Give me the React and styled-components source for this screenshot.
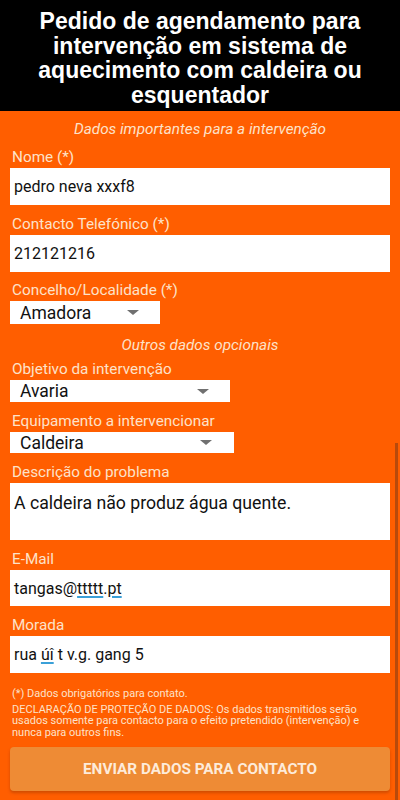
import React from 'react';
import styled, { createGlobalStyle } from 'styled-components';

const GlobalStyle = createGlobalStyle`
  html, body {
    margin: 0;
    padding: 0;
    background: #ff5e00;
  }
  * {
    box-sizing: border-box;
  }
`;

const Page = styled.div`
  width: 400px;
  height: 800px;
  position: relative;
  overflow: hidden;
  background: #ff5e00;
  font-family: Roboto, 'Liberation Sans', sans-serif;
`;

const Header = styled.div`
  background: #000;
  color: #fff;
  height: 111px;
  padding: 9px 16px 0;
  text-align: center;
  font-family: 'Liberation Sans', Arial, sans-serif;
  font-weight: 700;
  font-size: 23px;
  line-height: 24.5px;
`;

const Form = styled.div`
  padding: 9px 10px 0;
  display: flex;
  flex-direction: column;
`;

const Section = styled.div`
  text-align: center;
  font-style: italic;
  font-size: 15.3px;
  line-height: 18px;
  color: #fde2c9;
  margin-top: ${p => p.$mt || 0}px;
  margin-bottom: ${p => p.$mb || 7}px;
`;

const Label = styled.div`
  font-size: 15.3px;
  line-height: 16px;
  color: #fde2c9;
  padding-left: 2px;
  margin-bottom: 3px;
`;

const Field = styled.div`
  margin-bottom: ${p => p.$mb || 11}px;
`;

const Input = styled.div`
  background: #fff;
  height: ${p => p.$h || 37}px;
  padding: ${p => (p.$top ? '10px 4px 0' : '0 4px')};
  display: flex;
  align-items: ${p => (p.$top ? 'flex-start' : 'center')};
  font-size: ${p => p.$fs || 16}px;
  line-height: 21px;
  color: #111;
`;

const Spell = styled.span`
  text-decoration: underline;
  text-decoration-color: #3aa0d8;
  text-decoration-thickness: 2px;
  text-underline-offset: 2px;
`;

const Select = styled.div`
  width: ${p => p.$w}px;
  height: ${p => p.$h || 22}px;
  background: #fff;
  display: flex;
  align-items: center;
  justify-content: space-between;
  padding: 0 ${p => p.$pr || 21}px 0 10px;
  font-size: 17.5px;
  color: #111;
`;

const Arrow = styled.span`
  width: 0;
  height: 0;
  border-left: 6px solid transparent;
  border-right: 6px solid transparent;
  border-top: 5px solid #707070;
`;

const Note = styled.div`
  font-size: 11px;
  line-height: 11.5px;
  color: #fde2c9;
  padding-left: 2px;
  margin-top: ${p => p.$mt || 0}px;
`;

const Button = styled.div`
  margin-top: 9px;
  height: 44px;
  border-radius: 4px;
  background: #ee8b35;
  box-shadow: 0 2px 3px rgba(120, 40, 0, 0.35);
  display: flex;
  align-items: center;
  justify-content: center;
  color: #fdebdb;
  font-weight: 700;
  font-size: 15.3px;
`;

const Scrollbar = styled.div`
  position: absolute;
  right: 2px;
  top: 443px;
  width: 3px;
  height: 357px;
  background: #b84a0c;
`;

export default function App() {
  return (
    <Page>
      <GlobalStyle />
      <Header>
        Pedido de agendamento para intervenção em sistema de aquecimento com caldeira ou
        esquentador
      </Header>
      <Form>
        <Section $mb={11}>Dados importantes para a intervenção</Section>
        <Field>
          <Label>Nome (*)</Label>
          <Input>pedro neva xxxf8</Input>
        </Field>
        <Field $mb={10}>
          <Label>Contacto Telefónico (*)</Label>
          <Input>212121216</Input>
        </Field>
        <Field $mb={12}>
          <Label>Concelho/Localidade (*)</Label>
          <Select $w={150} $h={23}>
            Amadora
            <Arrow />
          </Select>
        </Field>
        <Section>Outros dados opcionais</Section>
        <Field>
          <Label>Objetivo da intervenção</Label>
          <Select $w={220}>
            Avaria
            <Arrow />
          </Select>
        </Field>
        <Field>
          <Label>Equipamento a intervencionar</Label>
          <Select $w={224} $h={21} $pr={22}>
            Caldeira
            <Arrow />
          </Select>
        </Field>
        <Field>
          <Label>Descrição do problema</Label>
          <Input $h={57} $top $fs={17.7}>
            A caldeira não produz água quente.
          </Input>
        </Field>
        <Field>
          <Label>E-Mail</Label>
          <Input $h={36}>
            tangas@<Spell>ttttt</Spell>.<Spell>pt</Spell>
          </Input>
        </Field>
        <Field $mb={15}>
          <Label>Morada</Label>
          <Input>
            rua&nbsp;<Spell>úî</Spell>&nbsp;t v.g. gang 5
          </Input>
        </Field>
        <Note>(*) Dados obrigatórios para contato.</Note>
        <Note $mt={4}>
          DECLARAÇÃO DE PROTEÇÃO DE DADOS: Os dados transmitidos serão usados somente para
          contacto para o efeito pretendido (intervenção) e nunca para outros fins.
        </Note>
        <Button>ENVIAR DADOS PARA CONTACTO</Button>
      </Form>
      <Scrollbar />
    </Page>
  );
}
